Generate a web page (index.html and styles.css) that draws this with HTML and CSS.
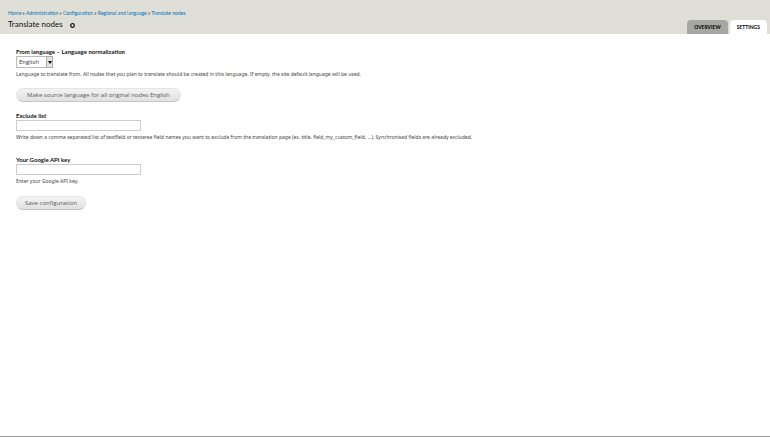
FILE: index.html
```html
<!DOCTYPE html>
<html lang="en">
<head>
    <meta charset="UTF-8">
    <title>Translate nodes</title>
    <meta name="viewport" content="width=device-width, initial-scale=1.0">
    <link rel="stylesheet" href="styles.css">
</head>

<body>

<header class="branding">
    <div class="heading">
        <nav class="breadcrumb">
            <a href="#">Home</a> » <a href="#">Administration</a> » <a href="#">Configuration</a> » <a href="#">Regional and language</a> » <a href="#">Translate nodes</a>
        </nav>
        <div class="title-row">
            <h1>Translate nodes</h1>
            <button type="button" class="shortcut" aria-label="Add to shortcuts">
                <svg viewBox="0 0 10 10" width="5" height="5">
                    <circle cx="5" cy="5" r="3.6" fill="#fff" stroke="#111" stroke-width="2.6"/>
                </svg>
            </button>
        </div>
    </div>
    <nav class="tabs">
        <a href="#" class="tab">OVERVIEW</a>
        <a href="#" class="tab active">SETTINGS</a>
    </nav>
</header>

<main>
    <form>
        <div class="form-item">
            <label for="from">From language – Language normalization</label>
            <div class="select-wrap">
                <select id="from">
                    <option>English</option>
                </select>
                <span class="arrow"></span>
            </div>
            <p class="description">Language to translate from. All nodes that you plan to translate should be created in this language. If empty, the site default language will be used.</p>
        </div>
        <button type="button" class="form-submit wide">Make source language for all original nodes English</button>
        <div class="form-item">
            <label for="exclude">Exclude list</label>
            <input type="text" id="exclude">
            <p class="description">Write down a comma separated list of textfield or textarea field names you want to exclude from the translation page (ex. title, field_my_custom_field, ...). Synchronised fields are already excluded.</p>
        </div>
        <div class="form-item">
            <label for="apikey">Your Google API key</label>
            <input type="text" id="apikey">
            <p class="description">Enter your Google API key.</p>
        </div>
        <button type="button" class="form-submit">Save configuration</button>
    </form>
</main>

</body>
</html>
```

FILE: styles.css
```css
* {
    box-sizing: border-box;
}

body {
    display: flex;
    flex-direction: column;
    min-height: 100vh;
    margin: 0;
    background-color: #fff;
    border-bottom: 1px solid #999;
    color: #111;
    font-family: Lato, "Open Sans", sans-serif;
    font-size: 6px;
}

.branding {
    display: flex;
    justify-content: space-between;
    align-items: flex-end;
    padding: 10px 3px 0 8px;
    background-color: #dfdfd7;
}

.breadcrumb {
    font-size: 5px;
    line-height: 7px;
}

.breadcrumb a {
    color: #0074bd;
    text-decoration: none;
}

.title-row {
    display: flex;
    align-items: center;
    gap: 7px;
    padding-bottom: 3px;
}

h1 {
    margin: 0;
    font-size: 8px;
    font-weight: normal;
    line-height: 14px;
}

.shortcut {
    display: flex;
    padding: 2px 0 0;
    border: none;
    background: none;
    cursor: pointer;
}

.tabs {
    display: flex;
    gap: 2px;
}

.tab {
    padding: 0 7px;
    border-radius: 4px 4px 0 0;
    background-color: #a6a7a2;
    color: #000;
    font-size: 5px;
    font-weight: bold;
    line-height: 14px;
    text-decoration: none;
}

.tab.active {
    background-color: #fff;
}

main {
    padding: 14px 16px;
}

.form-item {
    margin-bottom: 10px;
}

label {
    display: block;
    font-weight: bold;
    line-height: 8px;
}

.description {
    margin: 2px 0 0;
    color: #444;
    font-family: "Noto Sans", sans-serif;
    font-size: 5px;
    line-height: 8px;
}

input {
    display: block;
    width: 125px;
    height: 11px;
    padding: 1px 2px;
    border: 1px solid #ccc;
    background-color: #fff;
    font: inherit;
}

.select-wrap {
    display: grid;
    width: 37px;
    height: 12px;
}

select {
    grid-area: 1 / 1;
    appearance: none;
    padding: 0 2px;
    border: 1px solid #bbb;
    border-radius: 0;
    background-color: #fff;
    color: #333;
    font-family: "Open Sans", sans-serif;
    font-size: 6px;
}

/* drop-down handle drawn over the right end of the select */
.arrow {
    display: flex;
    grid-area: 1 / 1;
    justify-self: end;
    align-items: center;
    justify-content: center;
    width: 7px;
    border: 1px solid #aaa;
    background-color: #e4e4e4;
    pointer-events: none;
}

.arrow::after {
    content: "";
    border: 2px solid transparent;
    border-top: 3px solid #000;
    border-bottom: none;
}

.form-submit {
    display: block;
    height: 14px;
    margin-bottom: 10px;
    padding: 0 8px;
    border: 1px solid #e4e4e4;
    border-bottom-color: #c4c4c4;
    border-radius: 7px;
    background: linear-gradient(#f3f3f3, #e1e1e1);
    color: #5a5a5a;
    font-family: "Open Sans", sans-serif;
    font-size: 6px;
    cursor: pointer;
}

.form-submit.wide {
    padding: 0 10px;
}

.form-submit ~ .form-item {
    margin-bottom: 15px;
}

.form-submit ~ .form-item:last-of-type {
    margin-bottom: 11px;
}
```
